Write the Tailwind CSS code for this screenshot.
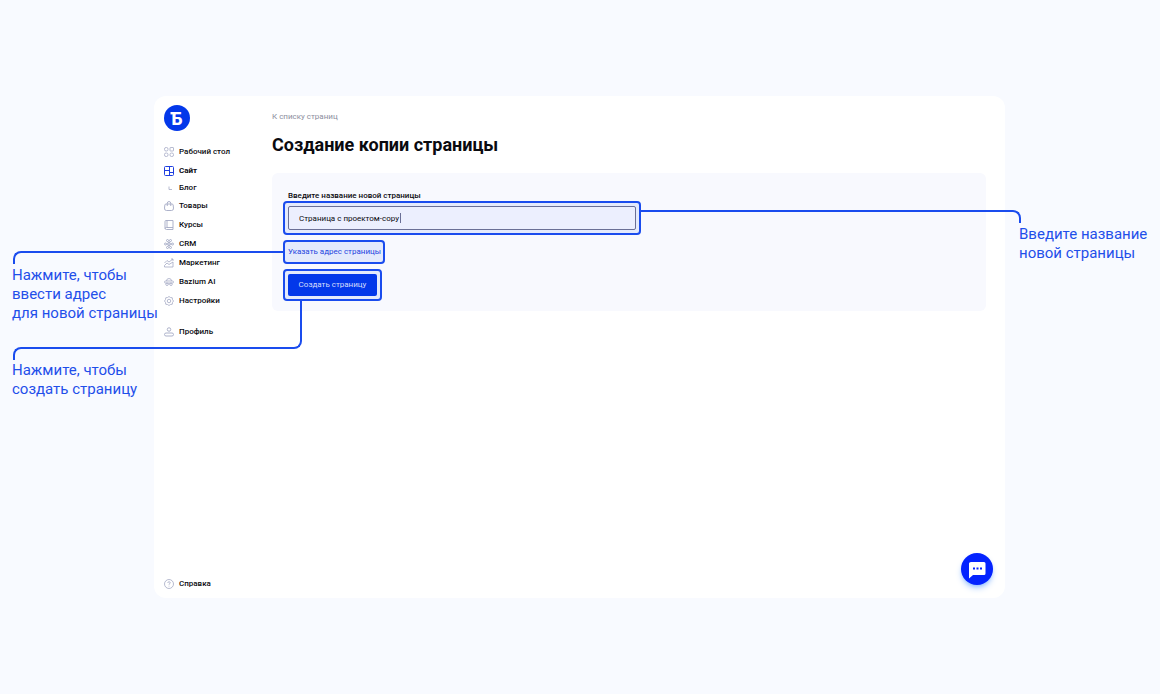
<!DOCTYPE html>
<html lang="ru">

<head>
	<meta charset="UTF-8">
	<meta name="viewport" content="width=device-width, initial-scale=1.0">
	<title>Создание копии страницы</title>
	<script src="https://cdn.jsdelivr.net/npm/@tailwindcss/browser@4"></script>
</head>

<body class="bg-[#f8faff] min-h-screen flex items-center pl-[154px] pr-[155px] font-['Roboto','Open_Sans',sans-serif] text-[8px] text-[#0a0a0f]">
	<div class="relative w-full min-h-[502px] bg-white rounded-xl flex">

		<!-- Sidebar -->
		<aside class="w-[118px] shrink-0 flex flex-col pl-[10px] pt-[9px] pb-[5px]">
			<a href="#" aria-label="Главная" class="w-[26px] h-[26px] mb-[11px]">
				<svg viewBox="0 0 26 26" class="w-full h-full font-['Inter',sans-serif]">
					<circle cx="13" cy="13" r="13" fill="#0338ea" />
					<path d="M6.500 8.200h5" stroke="#fff" stroke-width="2.400" />
					<text x="7.5" y="19.5" font-size="17" font-weight="800" fill="#fff">Б</text>
				</svg>
			</a>
			<nav class="grow flex flex-col font-medium">
				<a href="#" class="h-[19px] flex items-center gap-[5px]">
					<svg viewBox="0 0 20 20" class="w-[10px] h-[10px] text-[#a4a9c4]" fill="none" stroke="currentColor" stroke-width="1.6">
						<rect x="1" y="1" width="7" height="7" rx="3" />
						<rect x="12" y="1" width="7" height="7" rx="1" />
						<rect x="1" y="12" width="7" height="7" rx="3" />
						<rect x="12" y="12" width="7" height="7" rx="3" />
					</svg>
					Рабочий стол
				</a>
				<a href="#" class="h-[19px] flex items-center gap-[5px] font-bold">
					<svg viewBox="0 0 20 20" class="w-[10px] h-[10px] text-[#1f3fe0]" fill="none" stroke="currentColor" stroke-width="2">
						<rect x="1" y="1" width="18" height="18" rx="2" />
						<path d="M11 1v18M1 9h10M11 13h8" />
					</svg>
					Сайт
				</a>
				<a href="#" class="h-4 flex items-center gap-[5px]">
					<svg viewBox="0 0 20 20" class="w-[10px] h-[10px] text-[#a4a9c4]" fill="none" stroke="currentColor" stroke-width="1.6">
						<path d="M10 7v6h6" />
					</svg>
					Блог
				</a>
				<a href="#" class="h-[19px] flex items-center gap-[5px]">
					<svg viewBox="0 0 20 20" class="w-[10px] h-[10px] text-[#a4a9c4]" fill="none" stroke="currentColor" stroke-width="1.8">
						<path d="M4 6h12q2 0 2.300 2l.700 6q.500 5-4 5H5q-4.500 0-4-5l.700-6Q2 6 4 6zM6.500 10V5q0-4 3.500-4t3.500 4v5" />
					</svg>
					Товары
				</a>
				<a href="#" class="h-[19px] flex items-center gap-[5px]">
					<svg viewBox="0 0 20 20" class="w-[10px] h-[10px] text-[#a4a9c4]" fill="none" stroke="currentColor" stroke-width="1.8">
						<path d="M18 15V1H4Q2 1 2 3v13q0 3 3 3h13v-4H5q-3 0-3 2M6 1v14" />
					</svg>
					Курсы
				</a>
				<a href="#" class="h-[19px] flex items-center gap-[5px]">
					<svg viewBox="0 0 20 20" class="w-[10px] h-[10px] text-[#a4a9c4]" fill="none" stroke="currentColor" stroke-width="1.8">
						<circle cx="10" cy="10" r="2.5" />
						<circle cx="7" cy="3" r="2" />
						<circle cx="13" cy="3" r="2" />
						<circle cx="7" cy="17" r="2" />
						<circle cx="13" cy="17" r="2" />
						<circle cx="3" cy="10" r="2" />
						<circle cx="17" cy="10" r="2" />
						<path d="M8 5l1 3M12 5l-1 3M8 15l1-3M12 15l-1-3M5 10h3M12 10h3" />
					</svg>
					CRM
				</a>
				<a href="#" class="h-[19px] flex items-center gap-[5px]">
					<svg viewBox="0 0 20 20" class="w-[10px] h-[10px] text-[#a4a9c4]" fill="none" stroke="currentColor" stroke-width="1.6">
						<path d="M1 10l5-5 4 3 8-6M14 2h4v4M1 18v-3l5-5 4 3 8-5v10z" />
					</svg>
					Маркетинг
				</a>
				<a href="#" class="h-[19px] flex items-center gap-[5px]">
					<svg viewBox="0 0 20 20" class="w-[10px] h-[10px] text-[#a4a9c4]" fill="none" stroke="currentColor" stroke-width="1.6">
						<path d="M5 8q0-5 5-5t5 5M1 10q0-2 2-2h14q2 0 2 2t-2 2H3q-2 0-2-2zM9 14h2" />
						<circle cx="6" cy="14.500" r="2.500" />
						<circle cx="14" cy="14.500" r="2.500" />
					</svg>
					Bazium AI
				</a>
				<a href="#" class="h-[19px] flex items-center gap-[5px]">
					<svg viewBox="0 0 20 20" class="w-[10px] h-[10px] text-[#a4a9c4]" fill="none" stroke="currentColor" stroke-width="1.6">
						<path d="M10 1l3 2 3.500.500.500 3.500 2 3-2 3-.500 3.500-3.500.500-3 2-3-2-3.500-.500L3 13l-2-3 2-3 .500-3.500L7 3z" />
						<circle cx="10" cy="10" r="3.500" />
					</svg>
					Настройки
				</a>
				<a href="#" class="h-[19px] mt-3 flex items-center gap-[5px]">
					<svg viewBox="0 0 20 20" class="w-[10px] h-[10px] text-[#a4a9c4]" fill="none" stroke="currentColor" stroke-width="1.8">
						<circle cx="10" cy="5" r="3.500" />
						<rect x="1" y="12" width="18" height="6" rx="3" />
					</svg>
					Профиль
				</a>
				<a href="#" class="h-[19px] mt-auto flex items-center gap-[5px]">
					<svg viewBox="0 0 20 20" class="w-[10px] h-[10px] text-[#a4a9c4]" fill="none" stroke="currentColor" stroke-width="1.6">
						<circle cx="10" cy="10" r="9" />
						<path d="M7.500 8q0-2.500 2.500-2.500t2.500 2q0 1.500-2.500 3v1M10 13.500v1.500" />
					</svg>
					Справка
				</a>
			</nav>
		</aside>

		<!-- Content -->
		<main class="grow pt-4 pr-[19px]">
			<a href="#" class="block leading-[10px] text-[#8b8e9e]">К списку страниц</a>
			<h1 class="mt-[11px] text-[18px] leading-6 font-bold">Создание копии страницы</h1>

			<form class="mt-4 h-[138px] bg-[#f8f9fe] rounded-md pl-[11px] pt-[18px] flex flex-col items-start">
				<label for="page-name" class="pl-[5px] leading-[10px] font-medium">Введите название новой страницы</label>

				<div class="relative w-[358px] h-[34px] p-[3px] bg-[#e4eafc] border-2 border-[#1a4cee] rounded-[4px]">
					<input id="page-name" type="text" value="Страница с проектом-copy"
						class="block w-full h-full px-[10px] bg-[#eceffe] border border-[#6a6f96] rounded-[2px] outline-none">
					<!-- Text caret -->
					<span class="absolute left-[115px] top-[10px] w-px h-[10px] bg-[#6a6f96]"></span>
					<!-- Callout: name -->
					<div class="absolute left-full top-[7px] ml-0.5 w-[380px] h-[13px] border-t-2 border-r-2 border-[#1a4cee] rounded-tr-[8px]"></div>
					<p class="absolute left-[734px] top-[22px] text-[15px] leading-[19px] whitespace-nowrap text-[#1f4fea]">Введите название<br>новой страницы</p>
				</div>

				<div class="relative mt-[5px] w-[102px] h-[24px] px-[3px] flex items-center bg-[#e4eafc] border-2 border-[#1a4cee] rounded-[4px]">
					<a href="#" class="whitespace-nowrap text-[#1f45e0]">Указать адрес страницы</a>
					<!-- Callout: address -->
					<div class="absolute right-full top-[9px] mr-0.5 w-[270px] h-[13px] border-t-2 border-l-2 border-[#1a4cee] rounded-tl-[8px]"></div>
					<p class="absolute left-[-273px] top-[24px] text-[15px] leading-[19px] whitespace-nowrap text-[#1f4fea]">Нажмите, чтобы<br>ввести адрес<br>для новой страницы</p>
				</div>

				<div class="relative mt-[5px] w-[99px] h-[32px] p-[3px] bg-[#e4eafc] border-2 border-[#1a4cee] rounded-[4px]">
					<button type="submit" class="block w-full h-full bg-[#0338ea] text-[#d5defc] rounded-[2px] whitespace-nowrap">Создать страницу</button>
					<!-- Callout: create -->
					<div class="absolute left-0 top-full mt-0.5 w-[17px] h-[48px] border-r-2 border-b-2 border-[#1a4cee] rounded-br-[8px]"></div>
					<div class="absolute right-full top-[76px] w-[272px] h-[13px] border-t-2 border-l-2 border-[#1a4cee] rounded-tl-[8px]"></div>
					<p class="absolute left-[-273px] top-[90px] text-[15px] leading-[19px] whitespace-nowrap text-[#1f4fea]">Нажмите, чтобы<br>создать страницу</p>
				</div>
			</form>
		</main>

		<!-- Chat button -->
		<button type="button" aria-label="Чат" class="absolute right-3 bottom-[13px] w-8 h-8 rounded-full bg-[#0423ff] shadow-md shadow-blue-500/40">
			<svg viewBox="0 0 32 32" class="w-full h-full">
				<path d="M10 9h13q1.500 0 1.500 1.500v10q0 1.500-1.500 1.500H12l-4 3.500v-15Q8 9 10 9z" fill="#fff" />
				<path d="M12 14.500h2v2h-2zM15.500 14.500h2v2h-2zM19 14.500h2v2h-2z" fill="#0423ff" />
			</svg>
		</button>
	</div>
</body>

</html>
